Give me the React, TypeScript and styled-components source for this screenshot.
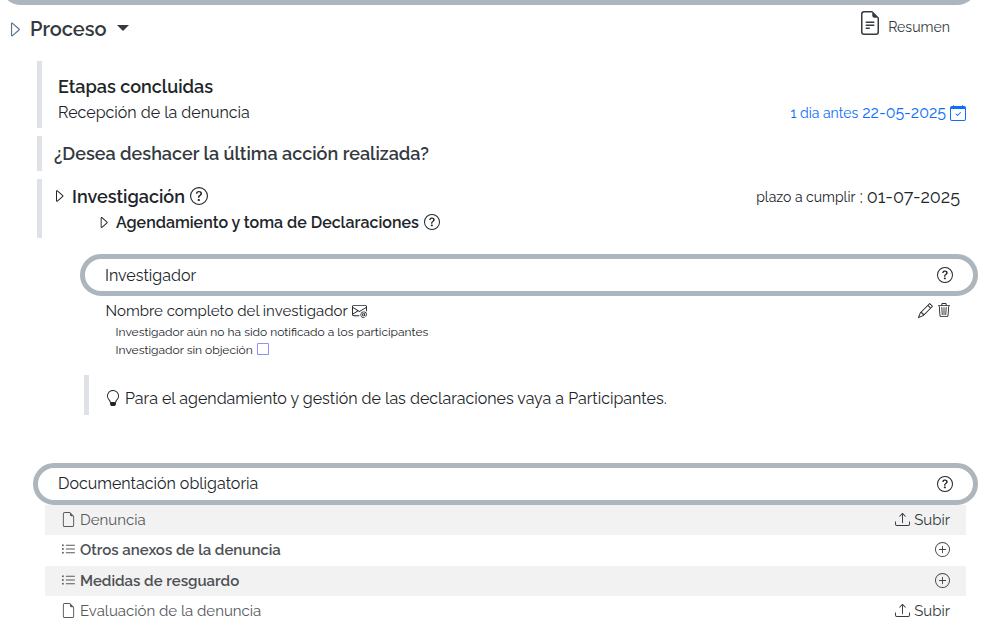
import React from 'react';
import styled, { createGlobalStyle } from 'styled-components';
import {
  BsCalendarCheck,
  BsCaretRight,
  BsEnvelopeAt,
  BsFileEarmark,
  BsFileEarmarkText,
  BsLightbulb,
  BsListUl,
  BsPencil,
  BsPlusCircle,
  BsQuestionCircle,
  BsSquare,
  BsTrash3,
  BsUpload,
} from 'react-icons/bs';

const GlobalStyle = createGlobalStyle`
  *, *::before, *::after { box-sizing: border-box; }
  body {
    margin: 0;
    background: #fff;
    color: #212529;
    font-family: Raleway, Lato, sans-serif;
  }
  svg { display: block; flex: none; }
`;

const Page = styled.main`
  width: 998px;
  height: 633px;
  overflow: hidden;
`;

const PreviousPanel = styled.div`
  display: flex;
  align-items: flex-end;
  height: 5px;
  overflow: hidden;
`;

const Pill = styled.header<{ $indent: number; $lift?: number }>`
  display: flex;
  flex: none;
  align-items: center;
  justify-content: space-between;
  width: ${p => 978 - p.$indent}px;
  height: 42px;
  margin-left: ${p => p.$indent}px;
  padding: 0 20px ${p => p.$lift ?? 0}px;
  border: 5px solid #adb5bd;
  border-radius: 21px;
`;

const Text = styled.span<{ $size: number; $weight?: number; $color?: string; $drop?: number }>`
  padding-top: ${p => (p.$drop ?? 0) * 2}px;
  font-size: ${p => p.$size}px;
  font-weight: ${p => p.$weight ?? 400};
  color: ${p => p.$color ?? '#212529'};
  line-height: 24px;
  white-space: nowrap;
`;

const TopRow = styled.div`
  display: flex;
  justify-content: space-between;
  height: 56px;
  padding: 6px 48px 0 5px;
`;

const ProcessTitle = styled.div`
  display: flex;
  align-items: center;
  height: 36px;
  color: #5b7288;
`;

const ProcessName = styled(Text)`
  margin-left: 6px;
`;

const DropdownCaret = styled.span`
  margin: 0 0 2px 10px;
  border-top: 6px solid #343a40;
  border-left: 6px solid transparent;
  border-right: 6px solid transparent;
`;

const SummaryLink = styled.div`
  display: flex;
  align-items: flex-start;
  gap: 6px;
  color: #343a40;

  ${Text} { margin-top: 4px; }
`;

const Stage = styled.section<{ $height: number; $indent?: number; $pad?: number }>`
  height: ${p => p.$height}px;
  margin-left: ${p => p.$indent ?? 37}px;
  padding-left: ${p => p.$pad ?? 16}px;
  border-left: 5px solid #dee2e6;
`;

const FinishedStages = styled(Stage)`
  padding-top: 13px;
`;

const UndoStage = styled(Stage)`
  display: flex;
  align-items: center;
  margin-top: 8px;
`;

const CurrentStage = styled(Stage)`
  margin-top: 8px;
  padding-top: 4px;
`;

const Line = styled.div<{ $height: number; $right?: number }>`
  display: flex;
  align-items: center;
  justify-content: space-between;
  height: ${p => p.$height}px;
  padding-right: ${p => p.$right ?? 0}px;
`;

const Group = styled.div<{ $gap: number; $left?: number; $color?: string }>`
  display: flex;
  align-items: center;
  gap: ${p => p.$gap}px;
  margin-left: ${p => p.$left ?? 0}px;
  color: ${p => p.$color ?? '#212529'};
`;

const Investigator = styled.section`
  padding-top: 16px;
`;

const InvestigatorBody = styled.div`
  height: 79px;
  padding: 2px 47px 0 105.6px;
`;

const Tip = styled(Stage)`
  display: flex;
  align-items: center;
  gap: 4px;
  padding-top: 6px;
`;

const Documents = styled.section`
  padding-top: 48px;
`;

const DocumentList = styled.ul`
  list-style: none;
  margin: 0 32px 0 45px;
  padding: 0;
`;

const DocumentRow = styled.li<{ $height: number }>`
  display: flex;
  align-items: center;
  justify-content: space-between;
  height: ${p => p.$height}px;
  padding: 0 16px 1px;
  color: #44484c;

  &:nth-child(odd) { background: #f2f2f2; }
  &:nth-child(even) { padding-bottom: 2px; }
`;

type Doc = { name: string; list: boolean; height: number };

const documents: Doc[] = [
  { name: 'Denuncia', list: false, height: 30 },
  { name: 'Otros anexos de la denuncia', list: true, height: 31 },
  { name: 'Medidas de resguardo', list: true, height: 30 },
  { name: 'Evaluación de la denuncia', list: false, height: 31 },
];

function DocumentItem({ doc }: { doc: Doc }) {
  return (
    <DocumentRow $height={doc.height}>
      <Group $gap={4} $color="#55595c">
        {doc.list ? <BsListUl size={15} /> : <BsFileEarmark size={15} />}
        <Text
          $size={15}
          $weight={doc.list ? 600 : 400}
          $color={doc.list ? '#4c5054' : '#55595c'}
          $drop={0.5}
        >
          {doc.name}
        </Text>
      </Group>
      {doc.list ? (
        <BsPlusCircle size={15} />
      ) : (
        <Group $gap={4} $color="#343a40">
          <BsUpload size={15} />
          <Text $size={15} $color="#343a40" $drop={0.5}>Subir</Text>
        </Group>
      )}
    </DocumentRow>
  );
}

export default function App() {
  return (
    <Page>
      <GlobalStyle />
      <PreviousPanel>
        <Pill as="div" $indent={0} />
      </PreviousPanel>

      <TopRow>
        <ProcessTitle>
          <BsCaretRight size={19} />
          <ProcessName $size={20} $weight={600} $color="#343a40">Proceso</ProcessName>
          <DropdownCaret />
        </ProcessTitle>
        <SummaryLink>
          <BsFileEarmarkText size={24} />
          <Text $size={14.1} $color="#343a40">Resumen</Text>
        </SummaryLink>
      </TopRow>

      <FinishedStages $height={67}>
        <Line $height={26}>
          <Text $size={18} $weight={600}>Etapas concluidas</Text>
        </Line>
        <Line $height={25} $right={32}>
          <Text $size={16}>Recepción de la denuncia</Text>
          <Group $gap={4} $color="#0d6efd">
            <Text $size={14} $color="#0d6efd">1 dia antes</Text>
            <Text $size={16} $color="#0d6efd">22-05-2025</Text>
            <BsCalendarCheck size={16} />
          </Group>
        </Line>
      </FinishedStages>

      <UndoStage $height={35} $pad={12}>
        <Text $size={18} $weight={600} $color="#343a40">
          ¿Desea deshacer la última acción realizada?
        </Text>
      </UndoStage>

      <CurrentStage $height={59} $pad={9}>
        <Line $height={26} $right={38}>
          <Group $gap={5}>
            <BsCaretRight size={16} />
            <Text $size={18} $weight={600} $drop={1}>Investigación</Text>
            <BsQuestionCircle size={18} />
          </Group>
          <Group $gap={4}>
            <Text $size={14} $drop={1}>plazo a cumplir</Text>
            <Text $size={18} $drop={1}>:</Text>
            <Text $size={18} $drop={1}>01-07-2025</Text>
          </Group>
        </Line>
        <Line $height={26}>
          <Group $gap={5} $left={45}>
            <BsCaretRight size={15} />
            <Text $size={16} $weight={600} $drop={1}>Agendamiento y toma de Declaraciones</Text>
            <BsQuestionCircle size={16} />
          </Group>
        </Line>
      </CurrentStage>

      <Investigator>
        <Pill $indent={80}>
          <Text $size={16} $drop={1}>Investigador</Text>
          <BsQuestionCircle size={16} />
        </Pill>
        <InvestigatorBody>
          <Line $height={24}>
            <Group $gap={4}>
              <Text $size={15} $drop={1}>Nombre completo del investigador</Text>
              <BsEnvelopeAt size={15} />
            </Group>
            <Group $gap={4}>
              <BsPencil size={15} />
              <BsTrash3 size={14} />
            </Group>
          </Line>
          <Line $height={18}>
            <Group $gap={0} $left={10}>
              <Text $size={12} $drop={1}>Investigador aún no ha sido notificado a los participantes</Text>
            </Group>
          </Line>
          <Line $height={18}>
            <Group $gap={4} $left={10} $color="#6a6aff">
              <Text $size={12} $drop={1}>Investigador sin objeción</Text>
              <BsSquare size={12} />
            </Group>
          </Line>
        </InvestigatorBody>
        <Tip $height={40} $indent={84}>
          <BsLightbulb size={16} />
          <Text $size={16} $drop={1}>
            Para el agendamiento y gestión de las declaraciones vaya a Participantes.
          </Text>
        </Tip>
      </Investigator>

      <Documents>
        <Pill $indent={33} $lift={1}>
          <Text $size={16}>Documentación obligatoria</Text>
          <BsQuestionCircle size={16} />
        </Pill>
        <DocumentList>
          {documents.map(doc => (
            <DocumentItem key={doc.name} doc={doc} />
          ))}
        </DocumentList>
      </Documents>
    </Page>
  );
}
